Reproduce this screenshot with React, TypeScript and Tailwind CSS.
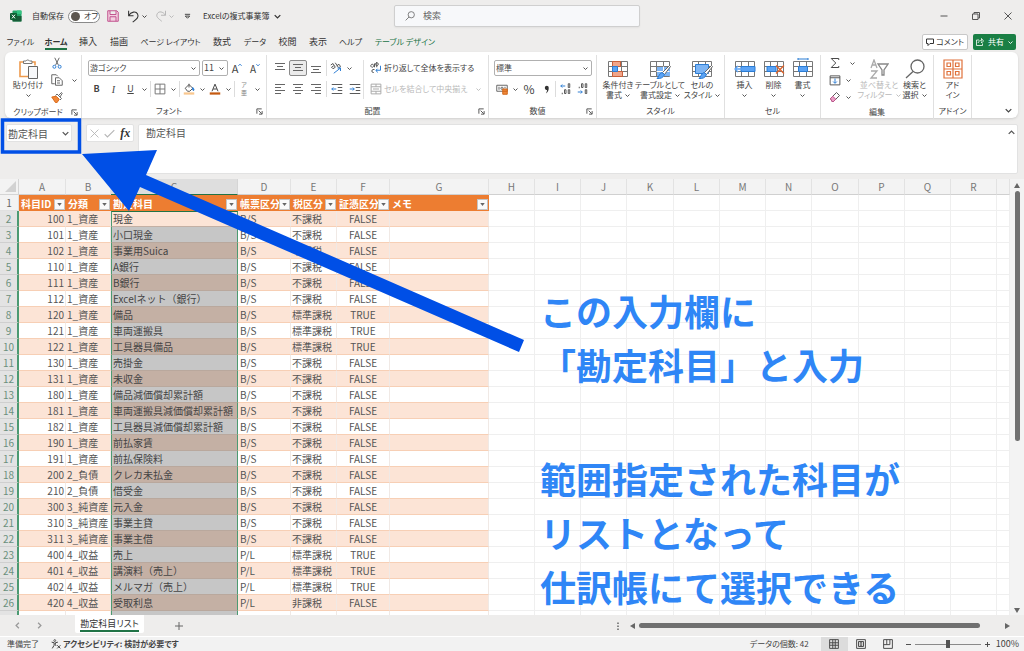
import type { ReactNode } from 'react';
import clsx from 'clsx';

type Row = [string, string, string, string, string, string];

const rows: Row[] = [
  ['100', '1_資産', '現金', 'B/S', '不課税', 'FALSE'],
  ['101', '1_資産', '小口現金', 'B/S', '不課税', 'FALSE'],
  ['102', '1_資産', '事業用Suica', 'B/S', '不課税', 'FALSE'],
  ['110', '1_資産', 'A銀行', 'B/S', '不課税', 'FALSE'],
  ['111', '1_資産', 'B銀行', 'B/S', '不課税', 'FALSE'],
  ['112', '1_資産', 'Excelネット（銀行）', 'B/S', '不課税', 'FALSE'],
  ['120', '1_資産', '備品', 'B/S', '標準課税', 'TRUE'],
  ['121', '1_資産', '車両運搬具', 'B/S', '標準課税', 'TRUE'],
  ['122', '1_資産', '工具器具備品', 'B/S', '標準課税', 'TRUE'],
  ['130', '1_資産', '売掛金', 'B/S', '不課税', 'FALSE'],
  ['131', '1_資産', '未収金', 'B/S', '不課税', 'FALSE'],
  ['180', '1_資産', '備品減価償却累計額', 'B/S', '不課税', 'FALSE'],
  ['181', '1_資産', '車両運搬具減価償却累計額', 'B/S', '不課税', 'FALSE'],
  ['182', '1_資産', '工具器具減価償却累計額', 'B/S', '不課税', 'FALSE'],
  ['190', '1_資産', '前払家賃', 'B/S', '不課税', 'FALSE'],
  ['191', '1_資産', '前払保険料', 'B/S', '不課税', 'FALSE'],
  ['200', '2_負債', 'クレカ未払金', 'B/S', '不課税', 'FALSE'],
  ['210', '2_負債', '借受金', 'B/S', '不課税', 'FALSE'],
  ['300', '3_純資産', '元入金', 'B/S', '不課税', 'FALSE'],
  ['310', '3_純資産', '事業主貸', 'B/S', '不課税', 'FALSE'],
  ['311', '3_純資産', '事業主借', 'B/S', '不課税', 'FALSE'],
  ['400', '4_収益', '売上', 'P/L', '標準課税', 'TRUE'],
  ['401', '4_収益', '講演料（売上）', 'P/L', '標準課税', 'TRUE'],
  ['402', '4_収益', 'メルマガ（売上）', 'P/L', '標準課税', 'TRUE'],
  ['420', '4_収益', '受取利息', 'P/L', '非課税', 'FALSE'],
  ['', '', '', '', '', ''],
];

const columns = [
  { name: 'A', width: 'w-[47px]', title: '科目ID' },
  { name: 'B', width: 'w-[45px]', title: '分類' },
  { name: 'C', width: 'w-[127px]', title: '勘定科目' },
  { name: 'D', width: 'w-[53px]', title: '帳票区分' },
  { name: 'E', width: 'w-[46px]', title: '税区分' },
  { name: 'F', width: 'w-[53px]', title: '証憑区分' },
  { name: 'G', width: 'w-[99px]', title: 'メモ' },
  { name: 'H', width: 'w-[46px]' },
  { name: 'I', width: 'w-[46px]' },
  { name: 'J', width: 'w-[46px]' },
  { name: 'K', width: 'w-[47px]' },
  { name: 'L', width: 'w-[46px]' },
  { name: 'M', width: 'w-[46px]' },
  { name: 'N', width: 'w-[46px]' },
  { name: 'O', width: 'w-[47px]' },
  { name: 'P', width: 'w-[46px]' },
  { name: 'Q', width: 'w-[46px]' },
  { name: 'R', width: 'w-[46px]' },
  { name: '', width: '' },
];

const blankColumns = columns.slice(7);

const tabs = [
  { label: 'ファイル', width: 'w-[37px] text-[8px]' },
  { label: 'ホーム', width: 'w-[34px] text-[8px]' },
  { label: '挿入', width: 'w-[30px]' },
  { label: '描画', width: 'w-[32px]' },
  { label: 'ページ レイアウト', width: 'w-[71px] text-[8px]' },
  { label: '数式', width: 'w-[32px]' },
  { label: 'データ', width: 'w-[34px] text-[8px]' },
  { label: '校閲', width: 'w-[31px]' },
  { label: '表示', width: 'w-[30px]' },
  { label: 'ヘルプ', width: 'w-[35px] text-[8px]' },
  { label: 'テーブル デザイン', width: 'w-[74px] text-[8px]' },
];

function Icon({ children, className = 'size-3', box = '0 0 16 16' }: { children: ReactNode; className?: string; box?: string }) {
  return (
    <svg viewBox={box} className={clsx('shrink-0', className)} fill="none" stroke="currentColor" strokeWidth="1.3" aria-hidden="true">
      {children}
    </svg>
  );
}

function Chevron({ className = 'size-[5px]' }: { className?: string }) {
  return (
    <svg viewBox="0 0 10 10" className={clsx('shrink-0', className)} fill="none" stroke="currentColor" strokeWidth="1.8" aria-hidden="true">
      <path d="M1 3l4 4 4-4" />
    </svg>
  );
}

function Tool({ label, width = 'w-4', className, children }: { label: string; width?: string; className?: string; children: ReactNode }) {
  return (
    <button aria-label={label} className={clsx('flex h-4 shrink-0 items-center justify-center', width, className)}>
      {children}
    </button>
  );
}

function More({ label, className }: { label: string; className?: string }) {
  return (
    <Tool label={label} width="w-2.5" className={className}>
      <Chevron />
    </Tool>
  );
}

function Divider() {
  return <span className="mx-px h-4 w-px shrink-0 bg-[#dcdcdc]" />;
}

function Picker({ label, value, width, size }: { label: string; value: string; width: string; size: string }) {
  return (
    <div className={clsx('relative flex h-4', width)}>
      <select aria-label={label} className={clsx('h-4 w-full appearance-none rounded-xs border border-[#b0b0b0] bg-white pl-px leading-[14px]', size)}>
        <option>{value}</option>
      </select>
      <Chevron className="pointer-events-none absolute top-1.5 right-1 size-[5px]" />
    </div>
  );
}

function Group({ label, width, launcher, children }: { label?: string; width: string; launcher?: boolean; children: ReactNode }) {
  return (
    <section className={clsx('mt-[3px] flex shrink-0 flex-col', width)}>
      <div className="flex flex-1 border-r border-[#e0e0e0]">{children}</div>
      <div className="flex h-[14px] items-center border-r border-[#e0e0e0] text-[8px] leading-[14px]">
        <span className="flex-1 text-center whitespace-nowrap">{label}</span>
        {launcher && (
          <button aria-label={label + 'の設定'} className="w-2.5">
            <Icon className="size-[7px]"><path d="M2 13V2h11M6 6l7 7M14 7v7H7" strokeWidth="2" /></Icon>
          </button>
        )}
      </div>
    </section>
  );
}

function BigTool({ icon, lines, chevron, width, disabled }: { icon: ReactNode; lines: string[]; chevron?: 'below' | 'inline'; width: string; disabled?: boolean }) {
  return (
    <button disabled={disabled} className={clsx('flex shrink-0 flex-col items-center pt-0.5 text-[8px] leading-[10px]', width, disabled && 'text-[#b9b9b9]')}>
      <span className="flex h-[23px] items-center">{icon}</span>
      {lines.map((line, i) => (
        <span key={line} className="flex items-center gap-[3px] whitespace-nowrap">
          {line}
          {chevron === 'inline' && i === lines.length - 1 && <Chevron />}
        </span>
      ))}
      {chevron === 'below' && <span className="flex h-2.5 items-center"><Chevron /></span>}
    </button>
  );
}

function Lines({ d }: { d: string }) {
  return <Icon className="size-3" box="0 0 12 12"><path d={d} strokeWidth="1" stroke="#666" /></Icon>;
}

// cell grid that several of the ribbon's pictures are built on
function Cells({ children }: { children?: ReactNode }) {
  return (
    <Icon className="size-[22px]" box="0 0 22 22">
      <path d="M1.500 3.500h19v15h-19zM1.500 8.500h19M1.500 13.500h19M7.500 3.500v15M14.500 3.500v15" stroke="#777" strokeWidth="1" />
      {children}
    </Icon>
  );
}

function TitleBar() {
  return (
    <header className="flex h-8 shrink-0 items-center text-[8px] text-[#333]">
      <div className="flex w-[394px] shrink-0 items-center">
        <svg viewBox="0 0 12 12" className="ml-2.5 size-3 shrink-0" aria-label="Excel">
          <rect x="2.500" y="0.500" width="9" height="11" rx="1" fill="#21a366" />
          <path d="M7 .5h4.500v3.500H7z" fill="#33c481" />
          <path d="M2.500 6h9v5.500h-9z" fill="#185c37" />
          <rect x="0" y="3" width="7" height="7" rx="1" fill="#0e5f32" />
          <path d="M2 4.700l3 3.700M5 4.700L2 8.400" stroke="#fff" strokeWidth="1" />
        </svg>
        <label htmlFor="autosave" className="ml-2.5 whitespace-nowrap">自動保存</label>
        <span className="relative ml-1 flex h-[13px] w-8 shrink-0 items-center rounded-full border border-[#8a8a8a] bg-white">
          <input id="autosave" type="checkbox" role="switch" className="ml-0.5 size-[9px] appearance-none rounded-full bg-[#5d5750]" />
          <span className="ml-1 text-[8px]">オフ</span>
        </span>
        <button aria-label="上書き保存" className="ml-[7px] text-[#c0508c]">
          <Icon className="size-3"><path d="M1 1h12l2 2v12H1zM4 1v5h8V1M4 15V9h8v6" fill="#f3cfe0" /></Icon>
        </button>
        <button aria-label="元に戻す" className="ml-2">
          <Icon className="size-[13px]"><path d="M2 1v6h6M2 7c3-5 9-6 11-2s-1 6-6 10" /></Icon>
        </button>
        <Chevron className="ml-0.5 size-[5px]" />
        <button aria-label="やり直し" className="ml-2 text-[#b5b5b5]">
          <Icon className="size-3"><path d="M14 1v6H8M14 7C11 2 5 1 3 5s1 6 6 10" /></Icon>
        </button>
        <Chevron className="ml-0.5 size-[5px] text-[#b5b5b5]" />
        <button aria-label="クイック アクセス" className="ml-2.5">
          <Icon className="size-[7px]"><path d="M2 3h12M3 7h10l-5 5z" strokeWidth="2" /></Icon>
        </button>
        <button className="ml-3 flex items-center gap-1 whitespace-nowrap">
          Excelの複式事業簿 <Chevron className="size-[7px]" />
        </button>
      </div>
      <label className="flex h-[22px] w-[246px] items-center gap-2 rounded-xs border border-[#cfcfcf] bg-[#f7f8fa] px-2.5 shadow-xs">
        <Icon className="size-2.5 text-[#666]"><circle cx="10" cy="6" r="5" /><path d="M6.500 9.500L1 15" /></Icon>
        <input aria-label="検索" placeholder="検索" className="w-full text-[9px] outline-none placeholder:text-[#666]" />
      </label>
      <div className="ml-auto flex text-[#555]">
        <button aria-label="最小化" className="flex w-8 justify-center"><Icon className="size-2"><path d="M1 8h14" strokeWidth="2" /></Icon></button>
        <button aria-label="元のサイズに戻す" className="flex w-8 justify-center"><Icon className="size-2"><path d="M1 4h11v11H1zM4 4V1h11v11h-3" strokeWidth="2" /></Icon></button>
        <button aria-label="閉じる" className="flex w-8 justify-center"><Icon className="size-2"><path d="M1 1l14 14M15 1L1 15" strokeWidth="2" /></Icon></button>
      </div>
    </header>
  );
}

function TabBar() {
  return (
    <nav className="flex h-5 shrink-0 items-center pr-2 pl-0.5 text-[9px] text-[#333]">
      {tabs.map((tab, i) => (
        <button key={tab.label} className={clsx('flex h-5 shrink-0 items-center justify-center whitespace-nowrap', tab.width, i === 10 && 'text-[#217346]')}>
          <span className={clsx('h-[15px] leading-[14px]', i === 1 && 'border-b-2 border-[#217346] font-bold')}>{tab.label}</span>
        </button>
      ))}
      <button className="ml-auto flex h-4 items-center gap-0.5 rounded-xs border border-[#c8c8c8] bg-white px-[3px] text-[8px] whitespace-nowrap">
        <Icon className="size-2"><path d="M1 2h14v9H8l-4 4v-4H1z" strokeWidth="2" /></Icon>
        コメント
      </button>
      <button className="ml-[5px] flex h-4 w-[43px] items-center justify-center gap-1 rounded-xs bg-[#1a7f45] text-[8px] whitespace-nowrap text-white">
        <Icon className="size-2"><path d="M6 4H1v11h12v-4M4 10c1-4 4-5 7-5V1l4 5-4 4V7" strokeWidth="1.600" /></Icon>
        共有
        <Chevron />
      </button>
    </nav>
  );
}

function ClipboardGroup() {
  return (
    <Group label="クリップボード" width="w-[77px]" launcher>
      <BigTool
        width="ml-0.5 w-[42px]"
        lines={['貼り付け']}
        chevron="below"
        icon={
          <Icon className="size-[22px]" box="0 0 22 22">
            <path d="M6.500 4H3v14.500h8M15 4h3v3.500" stroke="#ee9a4d" strokeWidth="1.600" />
            <path d="M6.500 5.500v-2.500h2.500a2 2 0 013.500 0H15v2.500z" fill="#fff" stroke="#777" strokeWidth="1" />
            <path d="M11.500 8.500h9v12h-9z" fill="#f7f8fa" stroke="#666" strokeWidth="1" />
          </Icon>
        }
      />
      <div className="flex flex-col gap-px">
        <Tool label="切り取り"><Icon className="size-3"><path d="M5 1l5 10M11 1L6 11" stroke="#666" /><circle cx="4.500" cy="13" r="2" stroke="#2b7cd3" /><circle cx="11.500" cy="13" r="2" stroke="#2b7cd3" /></Icon></Tool>
        <div className="flex">
          <Tool label="コピー"><Icon className="size-3"><path d="M5 13H1V1h6l2 2M6 5h5l4 4v6H6zM8 9h4M8 12h4" stroke="#666" /></Icon></Tool>
          <More label="コピーのオプション" className="ml-1" />
        </div>
        <Tool label="書式のコピー"><Icon className="size-3"><path d="M1 8l6-1 4 4-3 4.500H6z" fill="#f0883a" stroke="#d9691a" /><path d="M6 6l2-2 6 6-2 2M10 6l4-4 1 1-3 5" stroke="#666" /></Icon></Tool>
      </div>
    </Group>
  );
}

function FontGroup() {
  return (
    <Group label="フォント" width="w-[185px]" launcher>
      <div className="flex flex-col gap-[5px] pt-[5px] pl-1.5">
        <div className="flex h-4 items-center">
          <Picker label="フォント名" value="游ゴシック" width="w-[112px]" size="text-[8px]" />
          <Picker label="フォント サイズ" value="11" width="ml-0.5 w-[26px]" size="text-[9px]" />
          <Tool label="フォント サイズの拡大" width="w-[18px]" className="text-[11px]">A<Icon className="mb-1.5 size-1 text-[#2b7cd3]"><path d="M1 12l7-8 7 8" strokeWidth="3" /></Icon></Tool>
          <Tool label="フォント サイズの縮小" width="w-[18px]" className="text-[10px]">A<Icon className="mb-1.5 size-1 text-[#2b7cd3]"><path d="M1 4l7 8 7-8" strokeWidth="3" /></Icon></Tool>
        </div>
        <div className="flex h-4 items-center text-[9px]">
          <Tool label="太字" width="w-[17px]" className="font-bold">B</Tool>
          <Tool label="斜体" width="w-[17px]" className="font-['Liberation_Serif',serif] text-[10px] italic">I</Tool>
          <Tool label="下線" width="w-[17px]" className="underline">U</Tool>
          <More label="下線の種類" />
          <Divider />
          <Tool label="罫線"><Icon className="size-3"><path d="M1.500 1.500h13v13h-13zM8 1.500v13M1.500 8h13" stroke="#777" /></Icon></Tool>
          <More label="罫線の種類" />
          <Divider />
          <Tool label="塗りつぶしの色">
            <Icon className="size-3"><path d="M3 7l5-5 5 5-4 4H6zM8 1v5" stroke="#555" /><path d="M13 6c2 2 2 4 1 4s-2-2-1-4z" stroke="#2b7cd3" fill="#2b7cd3" /><path d="M1 14h14" stroke="#f9c78f" strokeWidth="3" /></Icon>
          </Tool>
          <More label="塗りつぶしの色の選択" />
          <Tool label="フォントの色">
            <Icon className="size-3"><path d="M4 11l4-9.500L12 11M5.500 8h5" stroke="#444" /><path d="M1 14h14" stroke="#c55a11" strokeWidth="3" /></Icon>
          </Tool>
          <More label="フォントの色の選択" />
          <Divider />
          <Tool label="ふりがな" className="flex-col text-[6px] leading-[8px] text-[#888]"><span>ア</span><span>亜</span></Tool>
          <More label="ふりがなの設定" />
        </div>
      </div>
    </Group>
  );
}

function AlignGroup() {
  return (
    <Group label="配置" width="w-[222px]" launcher>
      <div className="my-[5px] flex w-[97px] flex-col gap-[5px] border-r border-[#e0e0e0] pl-1">
        <div className="flex">
          <Tool label="上揃え" width="w-[18px]"><Lines d="M1 1.500h10M3 4.500h6M1 7.500h10" /></Tool>
          <Tool label="上下中央揃え" width="w-[18px]" className="rounded-xs border border-[#8a8a8a] bg-[#ebebeb]"><Lines d="M1 2.500h10M3 5.500h6M1 8.500h10" /></Tool>
          <Tool label="下揃え" width="w-[18px]"><Lines d="M1 4.500h10M3 7.500h6M1 10.500h10" /></Tool>
          <Divider />
          <Tool label="方向"><Icon className="size-3"><path d="M1 4l3-2 3 5-3 2-2-2 3-2M7 1l4 6M9 5l3-2 2 3-3 2" stroke="#555" /><path d="M5 15L14 8M10 8h4v4" stroke="#2b7cd3" /></Icon></Tool>
          <More label="方向の選択" />
        </div>
        <div className="flex">
          <Tool label="左揃え" width="w-[18px]"><Lines d="M1 1.500h10M1 4.500h6M1 7.500h10M1 10.500h6" /></Tool>
          <Tool label="中央揃え" width="w-[18px]"><Lines d="M1 1.500h10M3 4.500h6M1 7.500h10M3 10.500h6" /></Tool>
          <Tool label="右揃え" width="w-[18px]"><Lines d="M1 1.500h10M5 4.500h6M1 7.500h10M5 10.500h6" /></Tool>
          <Divider />
          <Tool label="インデントを減らす" width="w-[18px]"><Icon className="size-3"><path d="M1 2h14M9 6h6M9 10h6M1 14h14" stroke="#555" /><path d="M7 8H1M3 6L1 8l2 2" stroke="#2b7cd3" /></Icon></Tool>
          <Tool label="インデントを増やす" width="w-[18px]"><Icon className="size-3"><path d="M1 2h14M9 6h6M9 10h6M1 14h14" stroke="#555" /><path d="M1 8h6M5 6l2 2-2 2" stroke="#2b7cd3" /></Icon></Tool>
        </div>
      </div>
      <div className="flex flex-1 flex-col gap-[5px] pt-[5px] pl-1.5 text-[8px]">
        <button className="flex h-4 items-center gap-0.5 whitespace-nowrap">
          <Icon className="size-3"><path d="M3 7a2 2 0 11.100 0M6 2v5M9 0v7M9 5a2 2 0 11.100 0M6 10H4c-2 0-2 4 0 4h1" stroke="#555" /><path d="M14 5v6H8M10 9l-2 2 2 3" stroke="#2b7cd3" /></Icon>
          折り返して全体を表示する
        </button>
        <button disabled className="flex h-4 items-center gap-0.5 whitespace-nowrap text-[#b9b9b9]">
          <Icon className="size-3"><path d="M1.500 1.500h13v13h-13zM1.500 5h13M1.500 11h13M8 1.500V5M8 11v3.500M4 8h8" stroke="#aaa" /></Icon>
          セルを結合して中央揃え
          <Chevron className="ml-1.5 size-[5px]" />
        </button>
      </div>
    </Group>
  );
}

function NumberGroup() {
  return (
    <Group label="数値" width="w-[108px]" launcher>
      <div className="flex flex-col gap-[5px] pt-[5px] pl-[5px]">
        <Picker label="表示形式" value="標準" width="w-[98px]" size="text-[8px]" />
        <div className="flex items-center">
          <Tool label="通貨表示形式"><Icon className="size-3"><path d="M1 3h14v8H1zM4 5v4M12 5v2" stroke="#666" /><circle cx="8" cy="7" r="1.500" stroke="#666" /><path d="M9 8h6v7H9zM9 11h6" fill="#f0883a" stroke="#d0661a" /></Icon></Tool>
          <More label="通貨の選択" />
          <Tool label="パーセント スタイル" width="w-[18px]" className="text-[12px]">%</Tool>
          <Tool label="桁区切りスタイル"><Icon className="size-[9px]"><path d="M5 5a3.500 3.500 0 117 0c0 5-2 8-5 10 1-2 2-4 2-6-2 0-4-1-4-4z" fill="#333" stroke="none" /></Icon></Tool>
          <Divider />
          <Tool label="小数点以下の表示桁数を増やす" width="w-[17px]"><Icon className="size-3"><path d="M7 4H1M3 2L1 4l2 2" stroke="#2b7cd3" /><path d="M11 1h2v5h-2zM6 9h2v5H6zM11 9h2v5h-2zM3 13v2" stroke="#555" /></Icon></Tool>
          <Tool label="小数点以下の表示桁数を減らす" width="w-[17px]"><Icon className="size-3"><path d="M1 12h6M5 10l2 2-2 2" stroke="#2b7cd3" /><path d="M6 1h2v5H6zM11 1h2v5h-2zM11 9h2v5h-2zM3 5v2" stroke="#555" /></Icon></Tool>
        </div>
      </div>
    </Group>
  );
}

function Ribbon() {
  const brush = (
    <>
      <path d="M20.500 7.500l1 1-6 8-2-2z" fill="#fff" stroke="#666" strokeWidth="1" />
      <path d="M13 14.500l2.500 2c-1 3-4 4.500-7.500 4 2-1.500 2-5 5-6z" stroke="#2b7cd3" fill="#5ba3f5" strokeWidth="1" />
    </>
  );
  return (
    <div className="mr-1.5 ml-[5px] flex h-[66px] shrink-0 rounded-md bg-white text-[#444] shadow-sm">
      <ClipboardGroup />
      <FontGroup />
      <AlignGroup />
      <NumberGroup />
      <Group label="スタイル" width="w-[128px]">
        <BigTool width="w-[42px]" lines={['条件付き', '書式']} chevron="inline" icon={<Cells><path d="M5.500 3.500h8v5h-8zM5.500 13.500h10v5h-10z" fill="#f0a58a" stroke="#c9603b" strokeWidth="1" /><path d="M5.500 8.500h5v5h-5z" fill="#5ba3f5" stroke="#2b7cd3" strokeWidth="1" /></Cells>} />
        <BigTool width="w-[42px]" lines={['テーブルとして', '書式設定']} chevron="inline" icon={<Cells><path d="M8 9h13v9H8z" fill="#7db5f5" stroke="none" /><path d="M7.500 13.500h13M14.500 8.500v10" stroke="#fff" strokeWidth="1" />{brush}</Cells>} />
        <BigTool width="w-[42px]" lines={['セルの', 'スタイル']} chevron="inline" icon={<Cells><path d="M4.500 6.500h13v9h-13z" fill="#7db5f5" stroke="#2b7cd3" strokeWidth="1" />{brush}</Cells>} />
      </Group>
      <Group label="セル" width="w-[96px]">
        <BigTool width="ml-[5px] w-[29px]" lines={['挿入']} chevron="below" icon={<Cells><path d="M7 8.500h14v5H7z" fill="#5ba3f5" stroke="#2b7cd3" strokeWidth="1" /><path d="M9 11H1M4 8l-3 3 3 3" stroke="#5ba3f5" /></Cells>} />
        <BigTool width="w-[29px]" lines={['削除']} chevron="below" icon={<Cells><path d="M4 8.500h9v5H4z" fill="#5ba3f5" stroke="#2b7cd3" strokeWidth="1" /><path d="M13 7.500l8 8M21 7.500l-8 8" stroke="#e0622a" strokeWidth="1.300" /></Cells>} />
        <BigTool width="w-[29px]" lines={['書式']} chevron="below" icon={<Cells><path d="M6.500 8.500h9v5h-9z" fill="#5ba3f5" stroke="#2b7cd3" strokeWidth="1" /><path d="M6 1h10M6 0v2M16 0v2" stroke="#2b7cd3" strokeWidth="1" /></Cells>} />
      </Group>
      <Group label="編集" width="w-[113px]">
        <div className="ml-1.5 flex w-[34px] flex-col gap-px">
          <div className="flex"><Tool label="オート SUM"><Icon className="size-3"><path d="M13 4V2H3l6 6-6 6h10v-2" stroke="#444" /></Icon></Tool><More label="集計方法" className="ml-1" /></div>
          <div className="flex"><Tool label="フィル"><Icon className="size-3"><path d="M1.500 2.500h13v12h-13zM1.500 5h13" stroke="#555" /><path d="M8 6v6M5.500 10L8 12.500l2.500-2.500" stroke="#2b7cd3" /></Icon></Tool><More label="フィルの方向" /></div>
          <div className="flex"><Tool label="クリア"><Icon className="size-3"><path d="M2 10l8-8 4 4-8 8H4z" stroke="#555" /><path d="M2 10l3-3 4 4-3 3H4z" fill="#e8a0c4" stroke="#c0508c" /></Icon></Tool><More label="クリアの対象" /></div>
        </div>
        <BigTool disabled width="w-9" lines={['並べ替えと', 'フィルター']} chevron="inline" icon={<Icon className="size-5" box="0 0 20 20"><path d="M2 9l3-8 3 8M3 6h4M2 12h6l-6 7h6" stroke="#aaa" /><path d="M9 5h10l-4 6v5h-2v-5z" stroke="#888" /></Icon>} />
        <BigTool width="w-[35px]" lines={['検索と', '選択']} chevron="inline" icon={<Icon className="size-5" box="0 0 20 20"><circle cx="12.500" cy="7.500" r="6.500" stroke="#666" /><path d="M8 12.500L1 19" stroke="#666" /></Icon>} />
      </Group>
      <Group label="アドイン" width="w-[38px]">
        <BigTool width="w-[37px]" lines={['アド', 'イン']} icon={<Icon className="size-5" box="0 0 20 20"><path d="M1 1h18v18H1zM10 1v18M1 10h18M4 4h3.500v3.500H4zM12.500 4H16v3.500h-3.500zM4 12.500h3.500V16H4zM12.500 12.500H16V16h-3.500z" stroke="#e0713a" strokeWidth="1.200" /></Icon>} />
      </Group>
      <button aria-label="リボンを折りたたむ" className="mt-auto mr-1.5 mb-1 ml-auto"><Chevron className="size-[7px]" /></button>
    </div>
  );
}

function FormulaBar() {
  return (
    <div className="flex h-[61px] shrink-0 items-start pt-1.5 pr-1.5 pb-[5px] pl-1.5 text-[10px] text-[#555]">
      <div className="flex h-[18px] w-[66px] shrink-0 items-center rounded-xs border border-[#e2e2e2] bg-white">
        <input aria-label="名前ボックス" defaultValue="勘定科目" className="min-w-0 flex-1 pl-px outline-none" />
        <button aria-label="名前の一覧" className="mr-0.5"><Chevron className="size-[7px]" /></button>
      </div>
      <div className="ml-3.5 flex h-[18px] w-12 shrink-0 items-center justify-around rounded-xs border border-[#e2e2e2] bg-white">
        <button aria-label="キャンセル" className="text-[#b5b5b5]"><Icon className="size-[9px]"><path d="M1 1l14 14M15 1L1 15" strokeWidth="1.600" /></Icon></button>
        <button aria-label="入力" className="text-[#b5b5b5]"><Icon className="size-[11px]"><path d="M1 9l4 4L15 3" strokeWidth="1.600" /></Icon></button>
        <button aria-label="関数の挿入" className="font-['Liberation_Serif',serif] text-[12px] leading-none font-bold text-[#333] italic">fx</button>
      </div>
      <div className="ml-1 flex h-[50px] flex-1 rounded-xs border border-[#e2e2e2] bg-white">
        <textarea aria-label="数式バー" defaultValue="勘定科目" className="flex-1 resize-none pl-[7px] leading-[15px] outline-none" />
        <button aria-label="数式バーの折りたたみ" className="mt-1 mr-0.5 self-start"><Chevron className="size-[7px] rotate-180" /></button>
      </div>
    </div>
  );
}

function Sheet() {
  return (
    <div className="flex min-h-0 flex-1">
      <div className="min-w-0 flex-1 overflow-hidden bg-white">
        <table className="w-full table-fixed border-separate border-spacing-0 text-[10px] leading-[15px] text-[#555]">
          <colgroup>
            <col className="w-[19px]" />
            {columns.map((c, i) => <col key={i} className={c.width} />)}
          </colgroup>
          <thead>
            <tr className="h-4 bg-[#f3f3f3] text-[#777]">
              <th className="border-r border-b border-[#d5d5d5] p-0">
                <svg viewBox="0 0 18 15" className="block h-[15px] w-full"><path d="M16 2v11H5z" fill="#d2d2d2" /></svg>
              </th>
              {columns.map((c, i) => (
                <th key={i} scope="col" className={clsx('border-r border-b p-0 font-normal', i === 2 ? 'border-r-[#d5d5d5] border-b-[#217346] bg-[#dedede]' : 'border-r-[#e2e2e2] border-b-[#d0d0d0]')}>
                  {c.name}
                </th>
              ))}
            </tr>
          </thead>
          <tbody>
            <tr className="h-4">
              <th scope="row" className="border-r border-b border-[#e0e0e0] bg-[#f3f3f3] p-0 font-normal text-[#666]">1</th>
              {columns.slice(0, 7).map(c => (
                <th key={c.name} scope="col" className="bg-[#ed7d31] p-0 font-bold text-white">
                  <div className="flex h-4 items-center pl-0.5">
                    <span className="min-w-0 flex-1 text-left whitespace-nowrap">{c.title}</span>
                    <button aria-label={c.title + 'のフィルター'} className="mt-[3px] mr-px flex h-[11px] w-[11px] shrink-0 items-center justify-center border border-[#c4c4c4] bg-[#fafafa]">
                      <svg viewBox="0 0 6 4" className="h-[3px] w-[5px]"><path d="M0 0h6L3 4z" fill="#666" /></svg>
                    </button>
                  </div>
                </th>
              ))}
              {blankColumns.map((_, i) => <td key={i} className="border-r border-b border-[#efefef] p-0" />)}
            </tr>
            {rows.map((row, r) => {
              const band = r % 2 === 0;
              const line = 'border-r border-b border-r-[#f0e9e5] border-b-[#f7cfb5] p-0 whitespace-nowrap';
              const cell = clsx(line, band ? 'bg-[#fce4d6]' : 'bg-white');
              return (
                <tr key={r} className="h-4">
                  <th scope="row" className="border-r-2 border-b border-r-[#4c9a72] border-b-[#cfcfcf] bg-[#e3e3e3] p-0 font-normal text-[#6a8f7c]">{row[0] && r + 2}</th>
                  <td className={clsx(cell, 'pr-px text-right')}>{row[0]}</td>
                  <td className={clsx(cell, 'pl-px')}>{row[1]}</td>
                  <td
                    className={clsx(
                      'border-x border-b border-x-[#4c9a72] p-0 pl-px whitespace-nowrap text-[#444]',
                      r === 0 && 'border-t border-t-[#217346] border-b-[#c4b0a4] bg-[#fce4d6] leading-[14px]',
                      r > 0 && (band ? 'border-b-[#b9a89d] bg-[#c4b0a4]' : 'border-b-[#b9a89d] bg-[#c6c6c6]'),
                    )}
                  >
                    {row[2]}
                  </td>
                  <td className={clsx(cell, 'pl-0.5')}>{row[3]}</td>
                  <td className={clsx(cell, 'pl-px')}>{row[4]}</td>
                  <td className={clsx(cell, 'text-center')}>{row[5]}</td>
                  <td className={cell} />
                  {blankColumns.map((_, i) => <td key={i} className="border-r border-b border-[#efefef] p-0" />)}
                </tr>
              );
            })}
          </tbody>
        </table>
      </div>
      <div className="flex w-3.5 shrink-0 flex-col items-center gap-[3px] bg-[#f3f3f3] py-0.5 text-[#666]">
        <button aria-label="上へスクロール"><svg viewBox="0 0 6 5" className="mt-0.5 h-[5px] w-1.5"><path d="M3 0l3 5H0z" fill="currentColor" /></svg></button>
        <div className="h-[250px] w-[5px] rounded-full bg-[#707070]" />
        <button aria-label="下へスクロール" className="mt-auto"><svg viewBox="0 0 6 5" className="h-[5px] w-1.5"><path d="M3 5l3-5H0z" fill="currentColor" /></svg></button>
      </div>
    </div>
  );
}

function SheetTabs() {
  return (
    <div className="flex h-[21px] shrink-0 items-center text-[9px] text-[#666]">
      <button aria-label="前のシート" className="ml-3.5 text-[#999]"><Chevron className="size-[7px] rotate-90" /></button>
      <button aria-label="次のシート" className="ml-[15px] text-[#999]"><Chevron className="size-[7px] -rotate-90" /></button>
      <button className="ml-8 flex h-[18px] w-[69px] justify-center self-start rounded-b-xs bg-white text-[#333]">
        <span className="h-[17px] border-b-2 border-[#217346] leading-[17px] whitespace-nowrap">勘定科目リスト</span>
      </button>
      <button aria-label="新しいシート" className="ml-[31px]"><Icon className="size-2"><path d="M8 0v16M0 8h16" strokeWidth="2" /></Icon></button>
      <div className="mr-3.5 ml-auto flex w-[396px] items-center">
        <Icon className="mr-2 size-2"><path d="M8 1v3M8 7v3M8 13v3" strokeWidth="3" /></Icon>
        <button aria-label="左へスクロール"><svg viewBox="0 0 5 6" className="h-1.5 w-[5px]"><path d="M0 3l5-3v6z" fill="currentColor" /></svg></button>
        <div className="mx-1 h-[5px] w-[341px] rounded-full bg-[#707070]" />
        <button aria-label="右へスクロール" className="ml-auto"><svg viewBox="0 0 5 6" className="h-1.5 w-[5px]"><path d="M5 3L0 0v6z" fill="currentColor" /></svg></button>
      </div>
    </div>
  );
}

function StatusBar() {
  return (
    <footer className="flex h-[15px] shrink-0 items-center border-t border-white bg-[#f2f2f2] text-[8px] whitespace-nowrap text-[#444]">
      <span className="ml-[7px]">準備完了</span>
      <Icon className="ml-3 size-2.5"><circle cx="6" cy="2.500" r="1.500" /><path d="M1 5l4 1v4l-3 5M11 5L7 6v3l1 2M10 10l5 5M15 10l-5 5" strokeWidth="1.600" /></Icon>
      <span className="ml-0.5 font-bold">アクセシビリティ: 検討が必要です</span>
      <span className="ml-auto">データの個数: 42</span>
      <div className="ml-3 flex">
        <button aria-label="標準" className="flex h-[14px] w-[27px] items-center justify-center bg-[#dcdcdc]"><Icon className="size-2.5"><path d="M1 1h14v14H1zM1 6h14M1 10h14M6 1v14M10 1v14" strokeWidth="1.500" /></Icon></button>
        <button aria-label="ページ レイアウト" className="flex h-[14px] w-[27px] items-center justify-center"><Icon className="size-2.5"><path d="M1 1h14v14H1zM4 4h8v8H4zM6 6h4M6 8h4M6 10h4" strokeWidth="1.500" /></Icon></button>
        <button aria-label="改ページ プレビュー" className="flex h-[14px] w-[27px] items-center justify-center"><Icon className="size-2.5"><path d="M1 1h14v14H1zM1 9h10V1M6 1v8" strokeWidth="1.500" /></Icon></button>
      </div>
      <button aria-label="縮小" className="ml-1"><Icon className="size-[5px]"><path d="M0 8h16" strokeWidth="3" /></Icon></button>
      <input
        type="range"
        aria-label="ズーム"
        min="0"
        max="200"
        defaultValue="100"
        className="mx-1 h-2 w-[66px] appearance-none bg-[linear-gradient(#8a8a8a,#8a8a8a)] bg-[length:100%_1px] bg-center bg-no-repeat [&::-webkit-slider-thumb]:h-2 [&::-webkit-slider-thumb]:w-1 [&::-webkit-slider-thumb]:appearance-none [&::-webkit-slider-thumb]:bg-[#555]"
      />
      <button aria-label="拡大"><Icon className="size-[5px]"><path d="M0 8h16M8 0v16" strokeWidth="3" /></Icon></button>
      <span className="mr-[5px] ml-1.5 text-[9px]">100%</span>
    </footer>
  );
}

// callouts drawn on top of the workbook
function Annotations() {
  return (
    <div className="pointer-events-none absolute inset-0">
      <svg viewBox="0 0 1024 651" className="absolute top-0 left-0 h-[651px] w-[1024px]" aria-hidden="true">
        <rect x="2.500" y="120" width="77" height="32" fill="none" stroke="#004fe6" strokeWidth="3.500" />
        <path d="M82 154L157 150L146 175L524 340L519 352L140 187L129 211z" fill="#004fe6" />
      </svg>
      <div className="absolute top-[283px] left-[540px] text-[36px] leading-[54px] font-bold whitespace-nowrap text-[#2f86f6]">
        <p>この入力欄に</p>
        <p>「勘定科目」と入力</p>
        <p className="mt-[60px]">範囲指定された科目が</p>
        <p>リストとなって</p>
        <p>仕訳帳にて選択できる</p>
      </div>
    </div>
  );
}

export default function App() {
  return (
    <div lang="ja" className="relative flex h-screen flex-col overflow-hidden bg-[#eeedec] font-['Noto_Sans_CJK_JP',sans-serif]">
      <div className="flex shrink-0 flex-col [font-feature-settings:'palt']">
        <TitleBar />
        <TabBar />
        <Ribbon />
      </div>
      <FormulaBar />
      <Sheet />
      <div className="flex shrink-0 flex-col [font-feature-settings:'palt']">
        <SheetTabs />
        <StatusBar />
      </div>
      <Annotations />
    </div>
  );
}
